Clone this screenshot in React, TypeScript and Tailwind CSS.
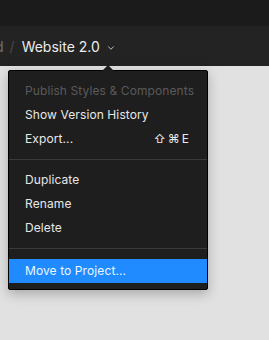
import { ChevronDown } from "lucide-react";

type Item = { label: string; shortcut?: string; disabled?: boolean; active?: boolean };

const groups: Item[][] = [
  [
    { label: "Publish Styles & Components", disabled: true },
    { label: "Show Version History" },
    { label: "Export...", shortcut: "⇧⌘E" },
  ],
  [{ label: "Duplicate" }, { label: "Rename" }, { label: "Delete" }],
  [{ label: "Move to Project...", active: true }],
];

function MenuRow({ label, shortcut, disabled, active }: Item) {
  return (
    <div
      className={`flex h-6 items-center justify-between whitespace-nowrap pl-4 pr-4 text-[12px] tracking-[0.1px] ${
        active ? "bg-[#1f8bff] text-[#eef6ff]" : disabled ? "text-[#5a5a5a]" : "text-[#e8e8e8]"
      }`}
    >
      <span>{label}</span>
      {shortcut && <span className="tracking-[2px]">{shortcut}</span>}
    </div>
  );
}

export default function App() {
  return (
    <div className="flex h-[340px] w-[269px] flex-col overflow-hidden bg-[#e1e1e1] font-['Inter',sans-serif]">
      <div className="h-[26px] bg-[#1b1b1b]" />
      <div className="flex h-10 items-center whitespace-nowrap bg-[#232323] text-[14px] text-[#ececec]">
        <span className="-ml-[5px] text-[#6f6f6f]">d</span>
        <span className="ml-[6px] text-[#4a4a4a]">/</span>
        <span className="ml-[7px]">Website 2.0</span>
        <ChevronDown className="ml-[6px] mt-[4px] h-[10px] w-[10px] text-[#dcdcdc]" strokeWidth={2} />
      </div>
      <div className="relative ml-2 mt-1 w-[200px] rounded-[2px] border border-black bg-[#1e1e1e] pb-[6px] pt-2 shadow-[0_4px_12px_rgba(0,0,0,0.25)]">
        <div className="absolute -top-[6px] left-[93px] h-0 w-0 border-x-[6px] border-b-[6px] border-x-transparent border-b-[#1e1e1e]" />
        {groups.map((g, i) => (
          <div key={i}>
            {i > 0 && <div className={`h-px bg-[#3a3a3a] ${i === 2 ? "mb-[10px] mt-2" : "my-2"}`} />}
            {g.map((it) => (
              <MenuRow key={it.label} {...it} />
            ))}
          </div>
        ))}
      </div>
    </div>
  );
}
